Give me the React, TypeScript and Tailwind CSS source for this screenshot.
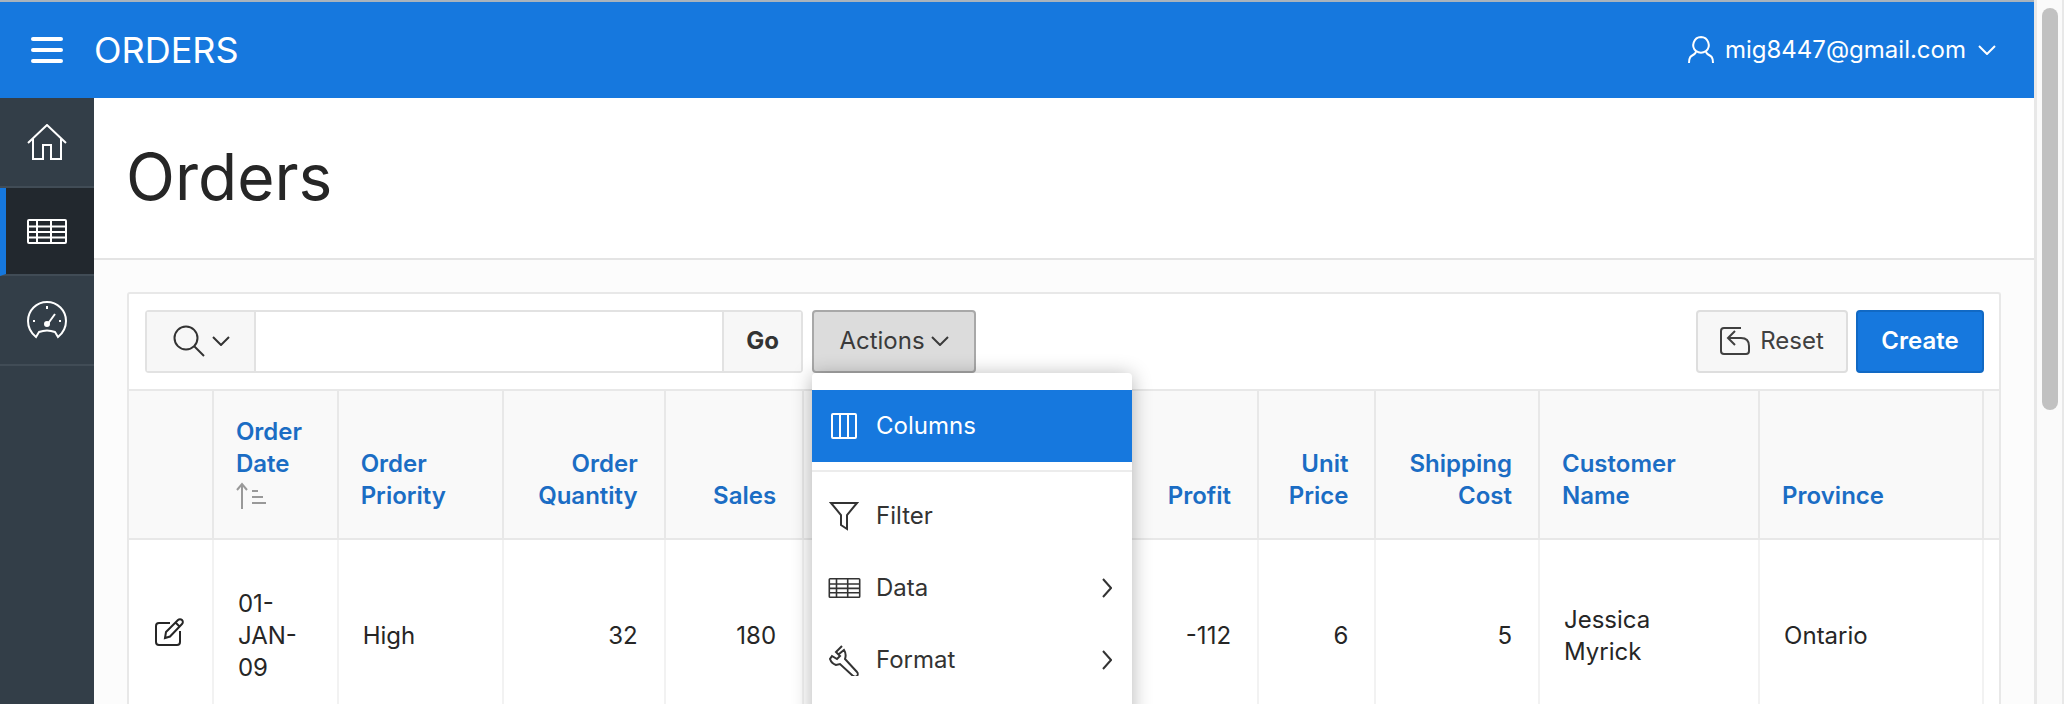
import React from "react";

const Ic = ({ w, h, vb, className, children }: { w: number; h: number; vb?: string; className?: string; children: React.ReactNode }) => (
  <svg width={w} height={h} viewBox={vb ?? `0 0 ${w} ${h}`} fill="none" stroke="currentColor" strokeWidth={2} className={className}>
    {children}
  </svg>
);

const Chevron = ({ className }: { className?: string }) => (
  <Ic w={18} h={10} className={className}><path d="M1 1l8 8 8-8" /></Ic>
);
const ChevronRight = () => (
  <Ic w={10} h={20} className="text-[#333]"><path d="M1 1l8 9-8 9" /></Ic>
);
const TableIcon = ({ w = 40, h = 25 }: { w?: number; h?: number }) => (
  <Ic w={w} h={h} vb="0 0 40 25">
    <rect x="1" y="1" width="38" height="23" rx="1" />
    <path d="M1 7.5h38M1 13h38M1 18.5h38M10 1v23M24 1v23" />
  </Ic>
);

const headCls = "border-r-2 border-b-2 border-[#e8e8e8] bg-[#f9f9f9] align-bottom pb-[26px] text-[24px] leading-[32px] font-semibold text-[#1b6dc4]";
const cellCls = "border-r-2 border-[#f2f2f2] align-middle text-[24px] leading-[32px] text-[#262626]";

type Col = { w: string; title: React.ReactNode; value: React.ReactNode; right?: boolean };
const cols: Col[] = [
  { w: "w-[119px]", title: <>Order<br />Date<br /><SortIcon /></>, value: <>01-<br />JAN-<br />09</> },
  { w: "w-[158px]", title: <>Order<br />Priority</>, value: "High" },
  { w: "w-[154px]", title: <>Order<br />Quantity</>, value: "32", right: true },
  { w: "w-[132px]", title: "Sales", value: "180", right: true },
  { w: "w-[153px]", title: "Discount", value: "0", right: true },
  { w: "w-[281px]", title: "Profit", value: "-112", right: true },
  { w: "w-[112px]", title: <>Unit<br />Price</>, value: "6", right: true },
  { w: "w-[156px]", title: <>Shipping<br />Cost</>, value: "5", right: true },
  { w: "w-[210px]", title: <>Customer<br />Name</>, value: <>Jessica<br />Myrick</> },
  { w: "w-[214px]", title: "Province", value: "Ontario" },
  { w: "w-[300px]", title: "Region", value: "Ontario" },
];

function SortIcon() {
  return (
    <span className="flex h-[32px] items-center">
      <Ic w={34} h={28} className="text-[#999]">
        <path d="M6 27V2M1 8l5-6 5 6M16 9h6M16 15h11M16 21h14" />
      </Ic>
    </span>
  );
}

export default function App() {
  return (
    <div className="flex h-[704px] w-[2064px] overflow-hidden bg-white font-['Inter',sans-serif]">
      <div className="flex w-[2034px] shrink-0 flex-col border-t-2 border-[#a9b3bc]">
        <header className="flex h-[96px] shrink-0 items-center bg-[#1678de] text-white">
          <div className="flex w-[94px] justify-center">
            <div className="flex w-[32px] flex-col gap-[7px]">
              <span className="h-[4px] rounded-sm bg-white" />
              <span className="h-[4px] rounded-sm bg-white" />
              <span className="h-[4px] rounded-sm bg-white" />
            </div>
          </div>
          <span className="text-[36px] leading-[40px]">ORDERS</span>
          <div className="ml-auto flex items-center pr-[38px] text-[24px] leading-[32px]">
            <Ic w={26} h={28} className="mr-[11px]">
              <path d="M13 1a8 8 0 0 0-5 14c0 2-1 3-3 4-2 1-4 2-4 8M13 1a8 8 0 0 1 5 14c0 2 1 3 3 4 2 1 4 2 4 8M8 15c3 2 7 2 10 0" />
            </Ic>
            <span>mig8447@gmail.com</span>
            <Chevron className="ml-[12px]" />
          </div>
        </header>

        <div className="flex min-h-0 flex-1">
          <nav className="flex w-[94px] shrink-0 flex-col bg-[#333e48] text-white">
            <div className="flex h-[90px] items-center justify-center border-b-2 border-[#414c56]">
              <Ic w={40} h={36}>
                <path d="M1 19L20 1l19 18M6 15v20h10V21h8v14h10V15" />
              </Ic>
            </div>
            <div className="flex h-[88px] items-center justify-center border-b-2 border-l-[6px] border-b-[#414c56] border-l-[#1678de] bg-[#22282e] pr-[6px]">
              <TableIcon />
            </div>
            <div className="flex h-[90px] items-center justify-center border-b-2 border-[#414c56]">
              <Ic w={40} h={38}>
                <path d="M9 36c-5-4-8-9-8-16a19 19 0 0 1 38 0c0 7-3 12-8 16l-3-5c-5-2-11-2-16 0z" />
                <path d="M20 5v3M6 20h2M32 20h2M20 24l8-11" />
                <circle cx="20" cy="23" r="2" fill="currentColor" />
              </Ic>
            </div>
          </nav>

          <main className="min-w-0 flex-1 bg-[#fcfcfc]">
            <div className="flex h-[162px] items-center border-b-2 border-[#e4e4e4] bg-white pb-[3px] pl-[32px]">
              <h1 className="text-[64px] leading-[72px] text-[#262626]">Orders</h1>
            </div>
            <div className="relative ml-[33px] mt-[32px] w-[1874px] rounded-t-[3px] border-2 border-b-0 border-[#e8e8e8] bg-white">
              <div className="flex h-[97px] items-center border-b-2 border-[#e8e8e8] pb-[1px] pl-[16px] pr-[15px]">
                <div className="flex h-[63px] w-[658px] rounded-[4px] border-2 border-[#e2e2e2] bg-white">
                  <div className="flex w-[109px] items-center justify-center gap-[7px] border-r-2 border-[#e2e2e2] bg-[#f7f7f7] pl-[2px] text-[#333]">
                    <Ic w={32} h={32}>
                      <circle cx="13" cy="13" r="11.5" />
                      <path d="M21 21l10 10" />
                    </Ic>
                    <Chevron />
                  </div>
                  <div className="flex-1" />
                  <div className="flex w-[79px] items-center justify-center border-l-2 border-[#e2e2e2] bg-[#f7f7f7] text-[24px] font-bold text-[#333]">Go</div>
                </div>
                <div className="ml-[9px] flex h-[63px] w-[164px] items-center justify-center gap-[6px] rounded-[4px] border-2 border-[#a8a8a8] bg-[#dcdcdc] text-[24px] text-[#3a3a3a]">
                  Actions
                  <Chevron />
                </div>
                <div className="ml-auto flex h-[63px] w-[152px] items-center justify-center gap-[10px] rounded-[4px] border-2 border-[#dedede] bg-[#f7f7f7] text-[24px] text-[#404040]">
                  <Ic w={30} h={30}>
                    <path d="M21 2H4a3 3 0 0 0-3 3v20a3 3 0 0 0 3 3h22a3 3 0 0 0 3-3v-5c0-5-3-8-8-8H8M15 5l-7 7 7 7" />
                  </Ic>
                  Reset
                </div>
                <div className="ml-[8px] flex h-[63px] w-[128px] items-center justify-center rounded-[4px] border-2 border-[#1169c4] bg-[#1678de] text-[24px] font-semibold text-white">Create</div>
              </div>

              <div className="overflow-hidden">
                <table className="w-[2170px] table-fixed border-separate border-spacing-0">
                  <thead>
                    <tr className="h-[149px]">
                      <th className={`${headCls} w-[81px]`} />
                      {cols.map((c, i) => (
                        <th key={i} className={`${headCls} ${c.w} ${c.right ? "pr-[26px] text-right" : "pl-[22px] text-left"}`}>
                          {c.title}
                        </th>
                      ))}
                    </tr>
                  </thead>
                  <tbody>
                    <tr className="h-[192px]">
                      <td className={`${cellCls} text-center text-[#1b6dc4]`}>
                        <span className="ml-[-2px] inline-flex">
                          <Ic w={30} h={30}>
                            <path d="M26 14v11a3 3 0 0 1-3 3H5a3 3 0 0 1-3-3V9a3 3 0 0 1 3-3h11" />
                            <path d="M11 21l1-6L24 3a2.800 2.800 0 0 1 4 4L16 19.500zM21.500 5.500l4 4" />
                          </Ic>
                        </span>
                      </td>
                      {cols.map((c, i) => (
                        <td key={i} className={`${cellCls} ${c.right ? "pr-[26px] text-right" : "pl-[24px] text-left"}`}>
                          {c.value}
                        </td>
                      ))}
                    </tr>
                  </tbody>
                </table>
              </div>

              <div className="absolute left-[683px] top-[79px] w-[320px] rounded-[4px] bg-white pt-[17px] text-[24px] text-[#333] shadow-[0_2px_20px_rgba(0,0,0,0.3)]">
                <div className="flex h-[72px] items-center bg-[#1678de] text-white">
                  <span className="flex w-[64px] justify-center">
                    <Ic w={26} h={26}>
                      <rect x="1" y="1" width="24" height="24" rx="1" />
                      <path d="M9 1v24M17 1v24" />
                    </Ic>
                  </span>
                  Columns
                </div>
                <div className="mt-[8px] mb-[8px] h-[2px] bg-[#ececec]" />
                <div className="flex h-[72px] items-center">
                  <span className="flex w-[64px] justify-center">
                    <Ic w={30} h={30}>
                      <path d="M2 2h26L18 14v14l-6-4V14z" />
                    </Ic>
                  </span>
                  Filter
                </div>
                <div className="flex h-[72px] items-center pr-[20px]">
                  <span className="flex w-[64px] justify-center">
                    <TableIcon w={33} h={20} />
                  </span>
                  Data
                  <span className="ml-auto flex"><ChevronRight /></span>
                </div>
                <div className="flex h-[72px] items-center pr-[20px]">
                  <span className="flex w-[64px] justify-center">
                    <Ic w={32} h={32}>
                      <path d="M14 2l-6 6 4 4-3 3-5-3-2 3c1 3 3 5 6 6l4-1 13 12c2 1 3 1 4 0s1-3 0-4L17 15c1-3 1-6-1-9l-5 4" />
                    </Ic>
                  </span>
                  Format
                  <span className="ml-auto flex"><ChevronRight /></span>
                </div>
                <div className="h-[72px]" />
              </div>
            </div>
          </main>
        </div>
      </div>

      <div className="flex flex-1 border-l-[3px] border-r-2 border-[#e8e8e8] bg-[#fafafa] pl-[5px] pt-[8px]">
        <div className="h-[402px] w-[16px] rounded-full bg-[#c1c1c1]" />
      </div>
    </div>
  );
}
